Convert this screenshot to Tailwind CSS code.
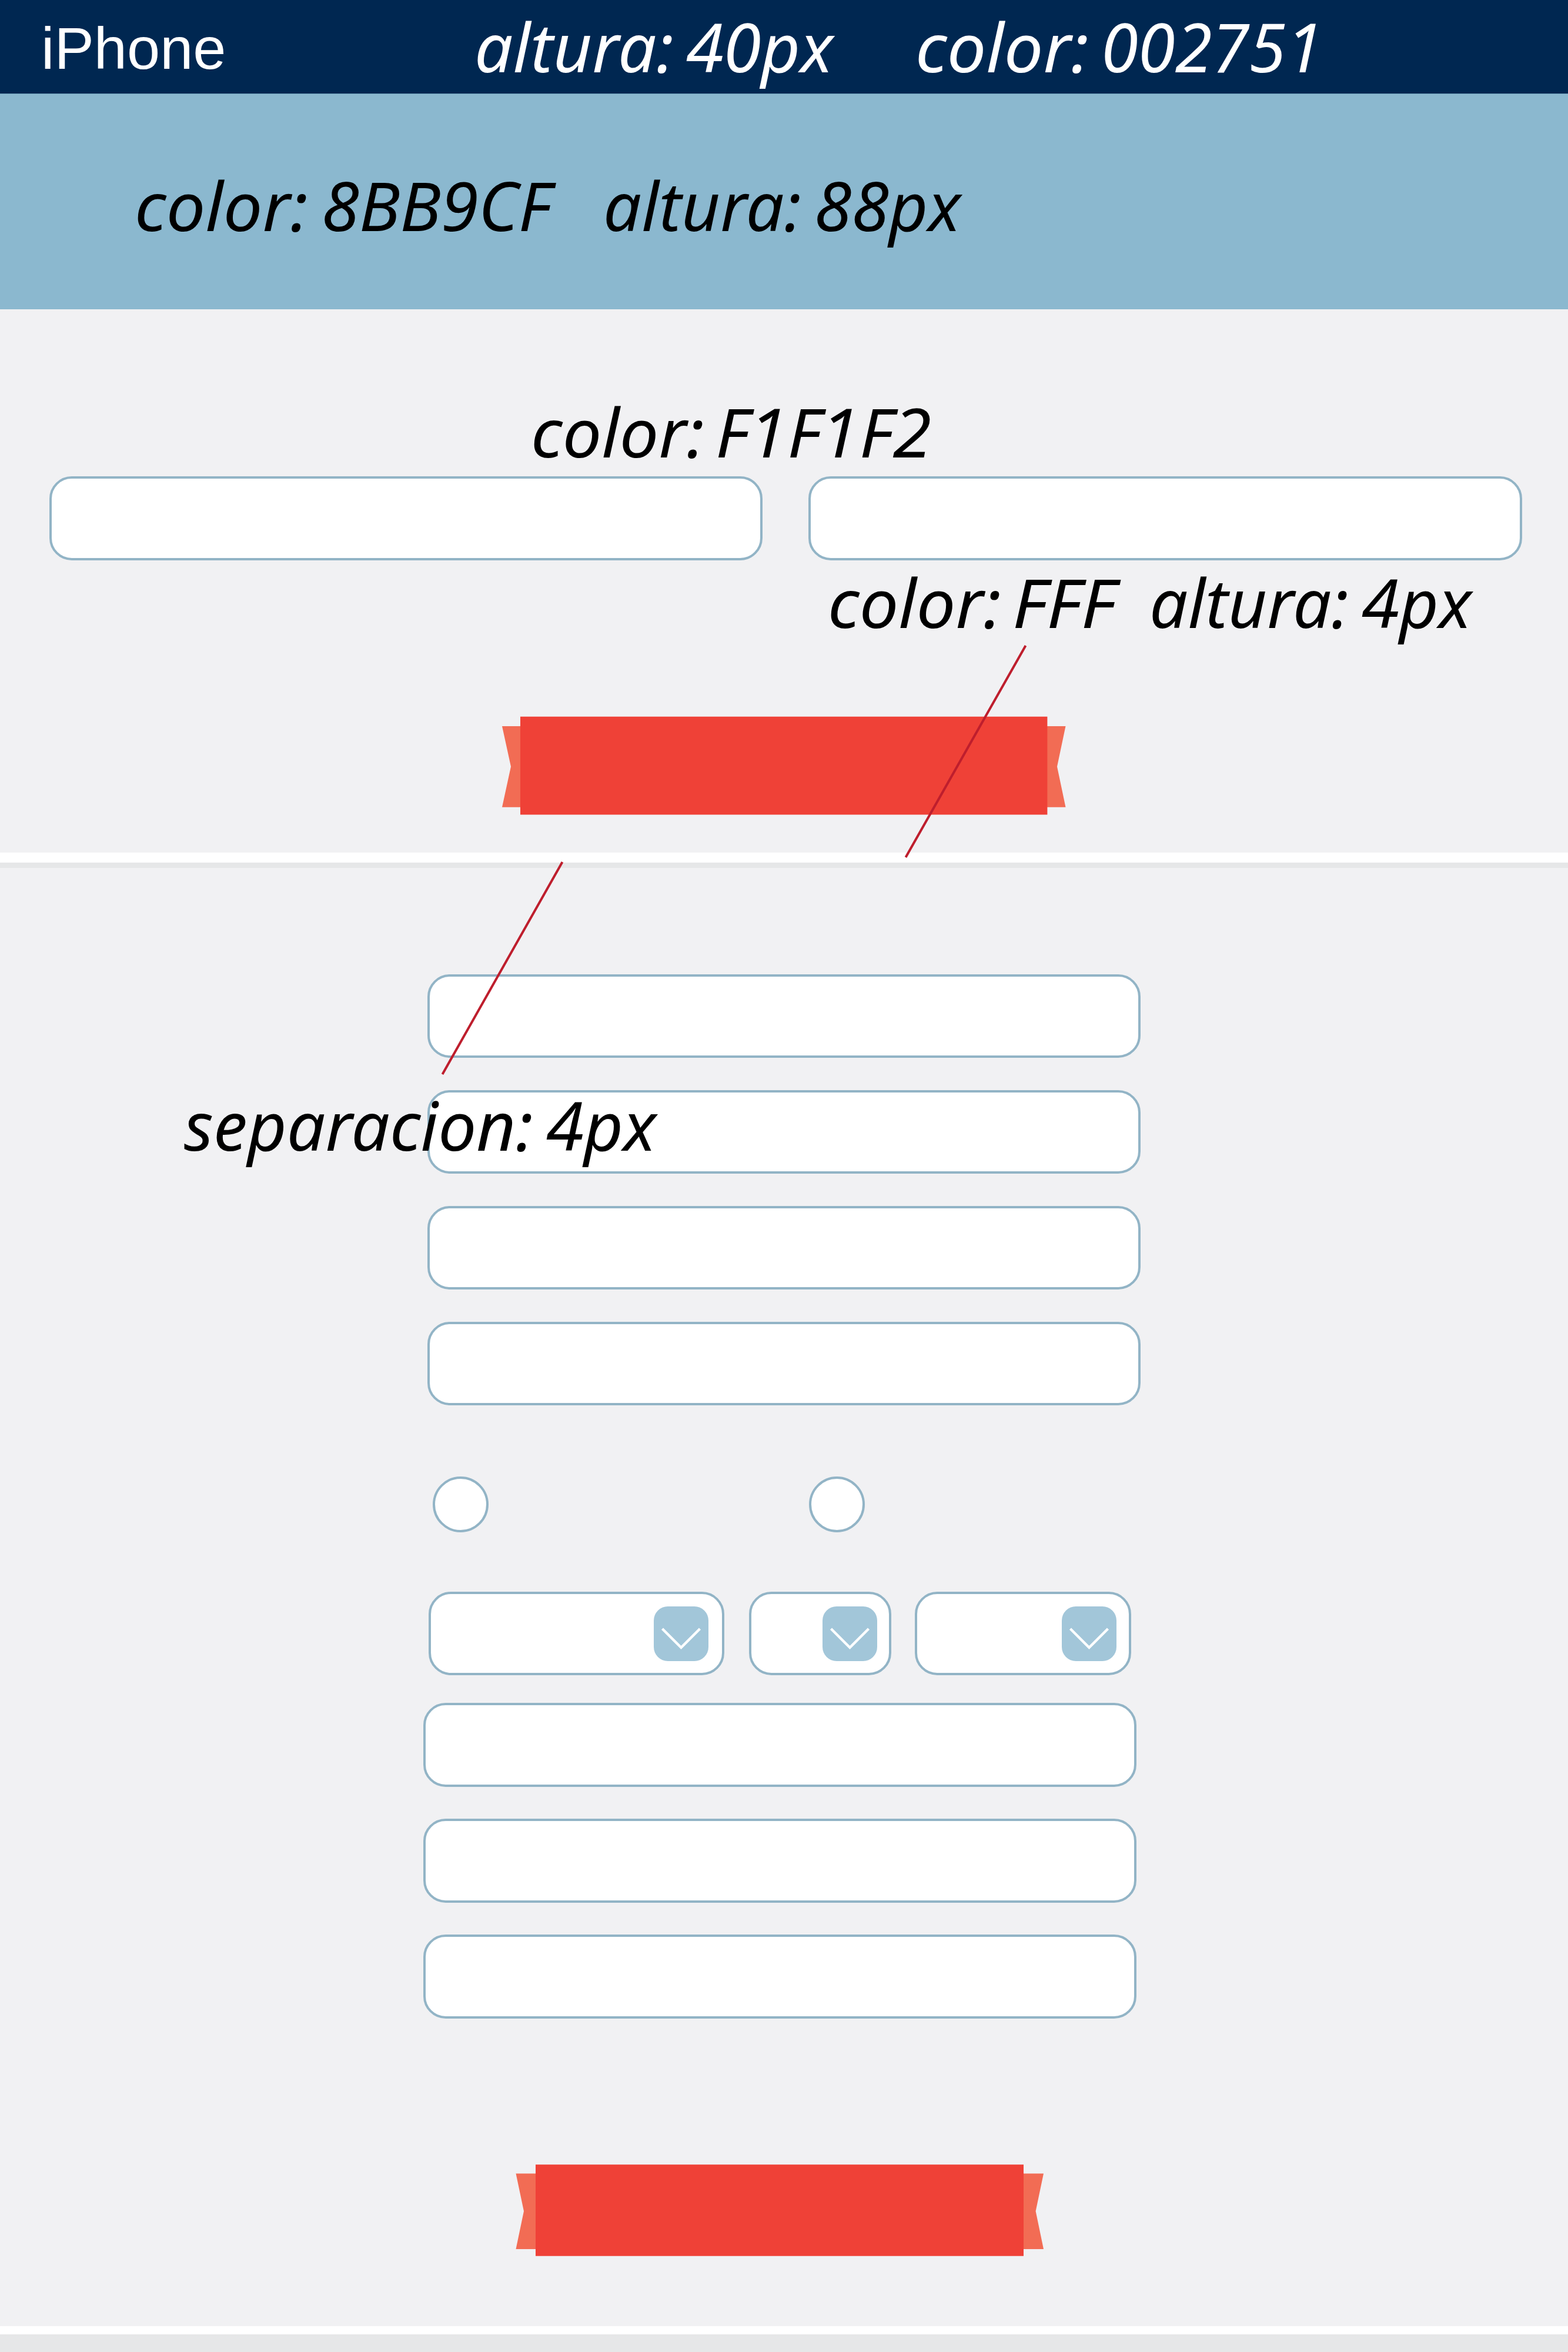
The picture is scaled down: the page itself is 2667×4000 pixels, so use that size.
<!DOCTYPE html>
<html lang="es">
<head>
<meta charset="utf-8">
<title>iPhone</title>
<script src="https://cdn.jsdelivr.net/npm/@tailwindcss/browser@4"></script>
</head>
<body class="bg-[#f1f1f3]">
<div class="relative flex h-[4000px] w-[2667px] flex-col overflow-hidden bg-[#f1f1f3]">
  <header class="h-[159px] shrink-0 bg-[#002751]"></header>
  <div class="h-[367px] shrink-0 border-t border-[#6d9bb5] bg-[#8bb8cf]"></div>

  <section class="flex h-[924px] shrink-0 flex-col items-center pt-[284px]">
    <div class="flex w-full gap-[78px] pl-[84px]">
      <div class="h-[143px] w-[1213px] rounded-[38px] border-4 border-[#92b4c6] bg-white"></div>
      <div class="h-[143px] w-[1214px] rounded-[38px] border-4 border-[#92b4c6] bg-white"></div>
    </div>
    <svg class="mt-[265px] h-[168px] w-[959px]" viewBox="854 1218 959 168">
      <path fill="#f26c54" d="M854 1235H900V1372.7H854L869 1303.7ZM1812.5 1235H1770V1372.7H1812.5L1798 1303.7Z"/>
      <path fill="#ef4137" d="M885 1218.7H1781.4V1385.6H885Z"/>
    </svg>
  </section>

  <div class="h-[26px] shrink-0 border-b-9 border-[#e6e7e8] bg-white"></div>

  <section class="flex h-[2480px] shrink-0 flex-col pt-[181px]">
    <div class="ml-[727px] flex flex-col gap-[55px]">
      <div class="h-[142px] w-[1213px] rounded-[38px] border-4 border-[#92b4c6] bg-white"></div>
      <div class="h-[142px] w-[1213px] rounded-[38px] border-4 border-[#92b4c6] bg-white"></div>
      <div class="h-[142px] w-[1213px] rounded-[38px] border-4 border-[#92b4c6] bg-white"></div>
      <div class="h-[142px] w-[1213px] rounded-[38px] border-4 border-[#92b4c6] bg-white"></div>
    </div>
    <div class="mt-[121px] ml-[736px] flex gap-[545px]">
      <div class="size-[95px] rounded-full border-4 border-[#92b4c6] bg-white"></div>
      <div class="size-[95px] rounded-full border-4 border-[#92b4c6] bg-white"></div>
    </div>
    <div class="mt-[101px] ml-[729px] flex">
      <div class="flex h-[142px] w-[503px] items-center justify-end rounded-[38px] border-4 border-[#92b4c6] bg-white pr-[23px]">
        <svg class="size-[93px] rounded-[24px] bg-[#a2c6d9]" viewBox="0 0 93 93" fill="none" stroke="#fff" stroke-width="4.4"><path d="M14.5 38L46.5 70L78.5 38"/></svg>
      </div>
      <div class="ml-[42px] flex h-[142px] w-[242px] items-center justify-end rounded-[38px] border-4 border-[#92b4c6] bg-white pr-[20px]">
        <svg class="size-[93px] rounded-[24px] bg-[#a2c6d9]" viewBox="0 0 93 93" fill="none" stroke="#fff" stroke-width="4.4"><path d="M14.5 38L46.5 70L78.5 38"/></svg>
      </div>
      <div class="ml-[40px] flex h-[142px] w-[368px] items-center justify-end rounded-[38px] border-4 border-[#92b4c6] bg-white pr-[21px]">
        <svg class="size-[93px] rounded-[24px] bg-[#a2c6d9]" viewBox="0 0 93 93" fill="none" stroke="#fff" stroke-width="4.4"><path d="M14.5 38L46.5 70L78.5 38"/></svg>
      </div>
    </div>
    <div class="mt-[47px] ml-[720px] flex flex-col gap-[54px]">
      <div class="h-[143px] w-[1213px] rounded-[38px] border-4 border-[#92b4c6] bg-white"></div>
      <div class="h-[143px] w-[1213px] rounded-[38px] border-4 border-[#92b4c6] bg-white"></div>
      <div class="h-[143px] w-[1213px] rounded-[38px] border-4 border-[#92b4c6] bg-white"></div>
    </div>
    <svg class="mt-[248px] ml-[877px] h-[156px] w-[899px]" viewBox="877 3681 899 156">
      <path fill="#f26c54" d="M877.5 3696.4H920V3825H877.5L891 3760.5ZM1775 3696.4H1730V3825H1775L1761.6 3760.5Z"/>
      <path fill="#ef4137" d="M911 3681.2H1741V3836.8H911Z"/>
    </svg>
  </section>

  <div class="h-[14px] shrink-0 bg-white"></div>
  <div class="h-[30px] shrink-0 bg-[#e6e7e8]"></div>

  <!-- spec annotations and leader lines, drawn over the layout -->
  <svg class="absolute inset-0 h-[4000px] w-[2667px] font-['Noto_Sans',sans-serif] text-[115px] italic" viewBox="0 0 2667 4000">
    <g stroke="#be1e2d" stroke-width="4">
      <path d="M1744.5 1098L1540.5 1458M956.5 1466L752.5 1827"/>
    </g>
    <text class="font-['Liberation_Sans',sans-serif] text-[101px] not-italic" fill="#fff" x="70" y="117">iPhone</text>
    <g fill="#fff">
      <text y="122.5"><tspan x="807" textLength="339" lengthAdjust="spacingAndGlyphs">altura:</tspan> <tspan x="1167" textLength="250" lengthAdjust="spacingAndGlyphs">40px</tspan></text>
      <text y="122.5"><tspan x="1557" textLength="295" lengthAdjust="spacingAndGlyphs">color:</tspan> <tspan x="1873" textLength="377" lengthAdjust="spacingAndGlyphs">002751</tspan></text>
    </g>
    <g fill="#000">
      <text y="393"><tspan x="229" textLength="295" lengthAdjust="spacingAndGlyphs">color:</tspan> <tspan x="547" textLength="390" lengthAdjust="spacingAndGlyphs">8BB9CF</tspan></text>
      <text y="393"><tspan x="1026" textLength="337" lengthAdjust="spacingAndGlyphs">altura:</tspan> <tspan x="1385" textLength="249" lengthAdjust="spacingAndGlyphs">88px</tspan></text>
      <text y="778"><tspan x="903" textLength="295" lengthAdjust="spacingAndGlyphs">color:</tspan> <tspan x="1217" textLength="367" lengthAdjust="spacingAndGlyphs">F1F1F2</tspan></text>
      <text y="1067.5"><tspan x="1408" textLength="295" lengthAdjust="spacingAndGlyphs">color:</tspan> <tspan x="1722" textLength="175" lengthAdjust="spacingAndGlyphs">FFF</tspan></text>
      <text y="1067.5"><tspan x="1955" textLength="339" lengthAdjust="spacingAndGlyphs">altura:</tspan> <tspan x="2316" textLength="187" lengthAdjust="spacingAndGlyphs">4px</tspan></text>
      <text y="1956.5"><tspan x="313" textLength="594" lengthAdjust="spacingAndGlyphs">separacion:</tspan> <tspan x="929" textLength="187" lengthAdjust="spacingAndGlyphs">4px</tspan></text>
    </g>
  </svg>
</div>
</body>
</html>
